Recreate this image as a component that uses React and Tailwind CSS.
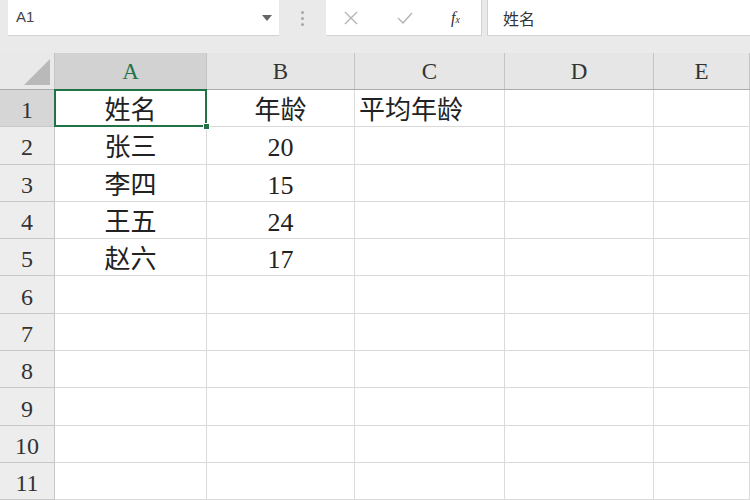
import React from "react";

const cols = ["A", "B", "C", "D", "E"];
const rows = [
  ["姓名", "年龄", "平均年龄"],
  ["张三", "20", ""],
  ["李四", "15", ""],
  ["王五", "24", ""],
  ["赵六", "17", ""],
  ["", "", ""],
  ["", "", ""],
  ["", "", ""],
  ["", "", ""],
  ["", "", ""],
  ["", "", ""],
];

const latin = { fontFamily: '"Liberation Serif", "Noto Sans CJK SC", serif' };
const cjk = { fontFamily: '"Liberation Serif", "Noto Sans CJK SC", serif' };

const FormulaBar = () => (
  <div className="flex h-[53px] items-start bg-[#eaeaea]">
    <div className="ml-[8px] flex h-[36px] w-[271px] items-center justify-between border-b border-[#d2d2d2] bg-white pl-[8px] pr-[7px]">
      <span className="text-[15px] text-[#444]" style={{ fontFamily: '"Liberation Sans", sans-serif' }}>
        A1
      </span>
      <svg width="10" height="6" viewBox="0 0 10 6">
        <path d="M0 0 L10 0 L5 6 Z" fill="#666" />
      </svg>
    </div>
    <div className="flex h-[36px] w-[47px] flex-col items-center justify-center gap-[3px]">
      <span className="h-[3px] w-[3px] rounded-full bg-[#a8a8a8]" />
      <span className="h-[3px] w-[3px] rounded-full bg-[#a8a8a8]" />
      <span className="h-[3px] w-[3px] rounded-full bg-[#a8a8a8]" />
    </div>
    <div className="flex h-[36px] w-[156px] items-center border-b border-r border-[#d2d2d2] bg-white">
      <svg className="ml-[18px]" width="14" height="14" viewBox="0 0 14 14">
        <path d="M1 1 L13 13 M13 1 L1 13" stroke="#b4b4b4" strokeWidth="1.4" />
      </svg>
      <svg className="ml-[39px]" width="16" height="12" viewBox="0 0 16 12">
        <path d="M1 6 L6 11 L15 1" stroke="#b4b4b4" strokeWidth="1.4" fill="none" />
      </svg>
      <span className="ml-[38px] text-[16px] italic text-[#333]" style={{ fontFamily: '"Liberation Serif", serif' }}>
        f<span className="text-[10px]">x</span>
      </span>
    </div>
    <div className="ml-[5px] flex h-[36px] flex-1 items-center border-b border-l border-[#d2d2d2] bg-white pl-[15px]">
      <span className="text-[16px] text-[#333]" style={{ fontFamily: '"Noto Sans CJK SC", sans-serif' }}>
        姓名
      </span>
    </div>
  </div>
);

const widths = ["w-[152px]", "w-[148px]", "w-[150px]", "w-[149px]", "flex-1"];

const Grid = () => (
  <div className="flex flex-col bg-white">
    <div className="flex h-[37px] border-b border-[#ababab] bg-[#e6e6e6]">
      <div className="relative w-[55px] shrink-0 border-r border-[#c4c4c4] bg-[#e9e9e9]">
        <svg className="absolute bottom-[4px] right-[4px]" width="26" height="26" viewBox="0 0 26 26">
          <path d="M26 0 L26 26 L0 26 Z" fill="#b9b9b9" />
        </svg>
      </div>
      {cols.map((c, i) => (
        <div
          key={c}
          className={`${widths[i]} shrink-0 flex items-center justify-center border-r border-[#c4c4c4] pt-[3px] text-[23px] ${
            i === 0 ? "bg-[#d2d2d2] text-[#21724a]" : "text-[#333]"
          }`}
          style={latin}
        >
          {c}
        </div>
      ))}
    </div>
    {rows.map((r, ri) => (
      <div key={ri} className="flex h-[37.3px]">
        <div
          className={`flex w-[55px] shrink-0 items-center justify-center border-b border-r border-[#c8c8c8] pt-[4px] text-[24px] text-[#333] ${
            ri === 0 ? "bg-[#d6d6d6]" : "bg-[#ededed]"
          }`}
          style={latin}
        >
          {ri + 1}
        </div>
        {cols.map((c, ci) => {
          const v = r[ci] || "";
          const sel = ri === 0 && ci === 0;
          return (
            <div
              key={c}
              className={`${widths[ci]} relative shrink-0 flex items-center border-b border-r border-[#dadada] pt-[6px] text-[26px] text-[#222] ${
                ci === 2 ? "justify-start pl-[4px]" : "justify-center"
              } ${sel ? "z-10" : ""}`}
              style={cjk}
            >
              {sel && (
                <>
                  <div className="pointer-events-none absolute -left-[1px] -top-[1px] bottom-[-1px] right-[-1px] border-2 border-[#217346]" />
                  <div className="absolute -bottom-[4px] -right-[4px] h-[7px] w-[7px] border border-white bg-[#217346]" />
                </>
              )}
              <span className="leading-none">{v}</span>
            </div>
          );
        })}
      </div>
    ))}
  </div>
);

export default function App() {
  return (
    <div className="h-[500px] w-[750px] overflow-hidden bg-white">
      <FormulaBar />
      <Grid />
    </div>
  );
}
